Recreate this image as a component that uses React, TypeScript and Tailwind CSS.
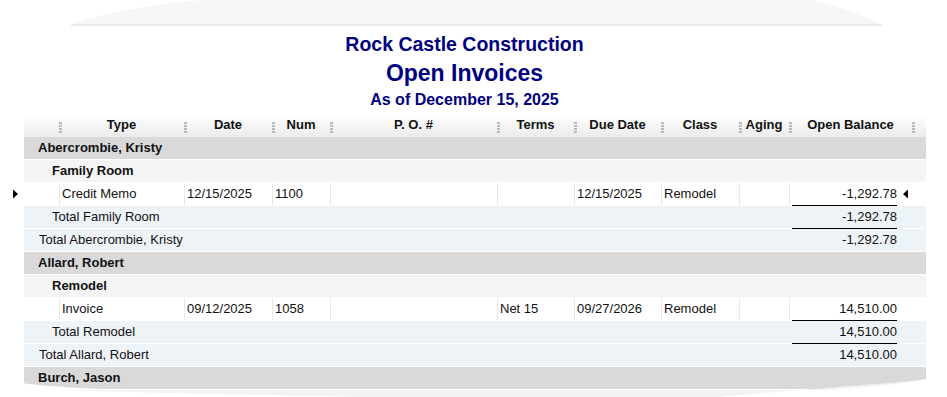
import React from "react";

type Col = { key: string; label: string; w: string };

const cols: Col[] = [
  { key: "type", label: "Type", w: "w-[125px]" },
  { key: "date", label: "Date", w: "w-[88px]" },
  { key: "num", label: "Num", w: "w-[58px]" },
  { key: "po", label: "P. O. #", w: "w-[167px]" },
  { key: "terms", label: "Terms", w: "w-[77px]" },
  { key: "due", label: "Due Date", w: "w-[87px]" },
  { key: "cls", label: "Class", w: "w-[78px]" },
  { key: "aging", label: "Aging", w: "w-[50px]" },
];

type Detail = Record<string, string>;

type Row =
  | { kind: "customer"; label: string }
  | { kind: "job"; label: string }
  | { kind: "detail"; data: Detail; bal: string; marked?: boolean; rule?: boolean }
  | { kind: "total"; level: 1 | 2; label: string; bal: string; rule?: boolean };

const rows: Row[] = [
  { kind: "customer", label: "Abercrombie, Kristy" },
  { kind: "job", label: "Family Room" },
  {
    kind: "detail",
    data: { type: "Credit Memo", date: "12/15/2025", num: "1100", po: "", terms: "", due: "12/15/2025", cls: "Remodel", aging: "" },
    bal: "-1,292.78",
    marked: true,
    rule: true,
  },
  { kind: "total", level: 2, label: "Total Family Room", bal: "-1,292.78", rule: true },
  { kind: "total", level: 1, label: "Total Abercrombie, Kristy", bal: "-1,292.78" },
  { kind: "customer", label: "Allard, Robert" },
  { kind: "job", label: "Remodel" },
  {
    kind: "detail",
    data: { type: "Invoice", date: "09/12/2025", num: "1058", po: "", terms: "Net 15", due: "09/27/2026", cls: "Remodel", aging: "" },
    bal: "14,510.00",
    rule: true,
  },
  { kind: "total", level: 2, label: "Total Remodel", bal: "14,510.00", rule: true },
  { kind: "total", level: 1, label: "Total Allard, Robert", bal: "14,510.00" },
];

function Grip() {
  return (
    <div className="mt-[8px] flex w-[3px] shrink-0 flex-col gap-px">
      <span className="h-[2px] w-[3px] bg-[#b9b9b9]" />
      <span className="h-[2px] w-[3px] bg-[#b9b9b9]" />
      <span className="h-[2px] w-[3px] bg-[#b9b9b9]" />
      <span className="h-[2px] w-[3px] bg-[#b9b9b9]" />
    </div>
  );
}

function RightMark() {
  return (
    <svg width="6" height="10" viewBox="0 0 6 10" className="shrink-0">
      <polygon points="0,0.5 5,5 0,9.5" fill="#000" />
    </svg>
  );
}

function LeftMark() {
  return (
    <svg width="6" height="10" viewBox="0 0 6 10" className="shrink-0">
      <polygon points="5,0.5 0,5 5,9.5" fill="#000" />
    </svg>
  );
}

function Rule({ on }: { on?: boolean }) {
  return (
    <div className="flex h-px">
      {on ? <div className="ml-[792px] h-px w-[105px] bg-black" /> : null}
    </div>
  );
}

function Balance({ value, marked }: { value: string; marked?: boolean }) {
  return (
    <div className="flex w-[122px] shrink-0 items-center">
      <div className="ml-[2px] w-[105px] shrink-0 text-right">{value}</div>
      {marked ? (
        <div className="ml-[6px] flex items-center">
          <LeftMark />
        </div>
      ) : null}
    </div>
  );
}

function TableRow({ row }: { row: Row }) {
  if (row.kind === "customer" || row.kind === "job") {
    const bg = row.kind === "customer" ? "bg-[#d9d9d9] pl-[14px]" : "bg-[#f4f4f4] pl-[28px]";
    return (
      <>
        <div className="flex h-[22px]">
          <div className="w-[24px] shrink-0" />
          <div className={`w-[902px] shrink-0 font-bold leading-[22px] ${bg}`}>{row.label}</div>
        </div>
        <Rule />
      </>
    );
  }

  if (row.kind === "total") {
    return (
      <>
        <div className="flex h-[22px]">
          <div className="w-[24px] shrink-0" />
          <div className="flex w-[902px] shrink-0 bg-[#eef3f8] leading-[22px]">
            <div className={`flex-1 ${row.level === 1 ? "pl-[15px]" : "pl-[28px]"}`}>{row.label}</div>
            <div className="w-px shrink-0" />
            <Balance value={row.bal} />
            <div className="w-[14px] shrink-0" />
          </div>
        </div>
        <Rule on={row.rule} />
      </>
    );
  }

  return (
    <>
      <div className="flex h-[22px]">
        <div className="flex w-[24px] shrink-0 items-center pl-[13px]">
          {row.marked ? <RightMark /> : null}
        </div>
        <div className="flex w-[902px] shrink-0 bg-white leading-[22px]">
          <div className="w-[35px] shrink-0" />
          {cols.map((c) => (
            <div
              key={c.key}
              className={`${c.w} shrink-0 overflow-hidden whitespace-nowrap border-l border-[#e9e9e9] pl-[2px]`}
            >
              {row.data[c.key]}
            </div>
          ))}
          <div className="w-px shrink-0 bg-[#e9e9e9]" />
          <Balance value={row.bal} marked={row.marked} />
          <div className="w-[14px] shrink-0" />
        </div>
      </div>
      <Rule on={row.rule} />
    </>
  );
}

export default function App() {
  return (
    <div className="relative h-[397px] w-[947px] overflow-hidden bg-white font-['Liberation_Sans',Arial,sans-serif] text-[13px] text-[#111]">
      <svg width="947" height="26" viewBox="0 0 947 26" className="block">
        <path d="M71,25 C100,14 150,4 205,0 L812,0 C838,7 862,15 882,25 Z" fill="#f6f6f6" />
        <rect x="71" y="24" width="811" height="2" fill="#ececec" />
      </svg>

      <div className="pr-[18px] text-center font-bold text-[#000080]">
        <div className="mt-[6px] text-[19.5px] leading-[24px]">Rock Castle Construction</div>
        <div className="mt-[3px] text-[23px] leading-[28px]">Open Invoices</div>
        <div className="mt-[3px] text-[16px] leading-[20px]">As of December 15, 2025</div>
      </div>

      <div className="mt-[4px] flex h-[23px]">
        <div className="w-[24px] shrink-0" />
        <div className="flex w-[902px] shrink-0 bg-gradient-to-b from-[#ffffff] to-[#ebebeb] font-bold leading-[22px]">
          <div className="w-[35px] shrink-0" />
          {cols.map((c) => (
            <div key={c.key} className={`${c.w} flex shrink-0`}>
              <Grip />
              <div className="flex-1 whitespace-nowrap pr-[3px] text-center">{c.label}</div>
            </div>
          ))}
          <div className="flex w-[123px] shrink-0">
            <Grip />
            <div className="flex-1 whitespace-nowrap pr-[3px] text-center">Open Balance</div>
          </div>
          <div className="flex w-[14px] shrink-0">
            <Grip />
          </div>
        </div>
      </div>

      {rows.map((r, i) => (
        <TableRow key={i} row={r} />
      ))}

      <div className="relative">
        <div className="flex h-[22px]">
          <div className="w-[24px] shrink-0" />
          <div className="w-[902px] shrink-0 bg-[#d9d9d9] pl-[14px] font-bold leading-[22px]">Burch, Jason</div>
        </div>
        <svg
          width="947"
          height="31"
          viewBox="0 0 947 31"
          className="pointer-events-none absolute left-0 top-0"
        >
          <path d="M20,16 Q55,20 100,22 L100,23 L20,23 Z" fill="#ffffff" />
          <path d="M827,22 Q880,19 927,12 L947,12 L947,23 L827,23 Z" fill="#ffffff" />
          <path d="M47,23 L827,23 Q880,20 926,13 L704,31 L410,31 Q200,27 47,23 Z" fill="#f3f3f3" />
        </svg>
      </div>
    </div>
  );
}
